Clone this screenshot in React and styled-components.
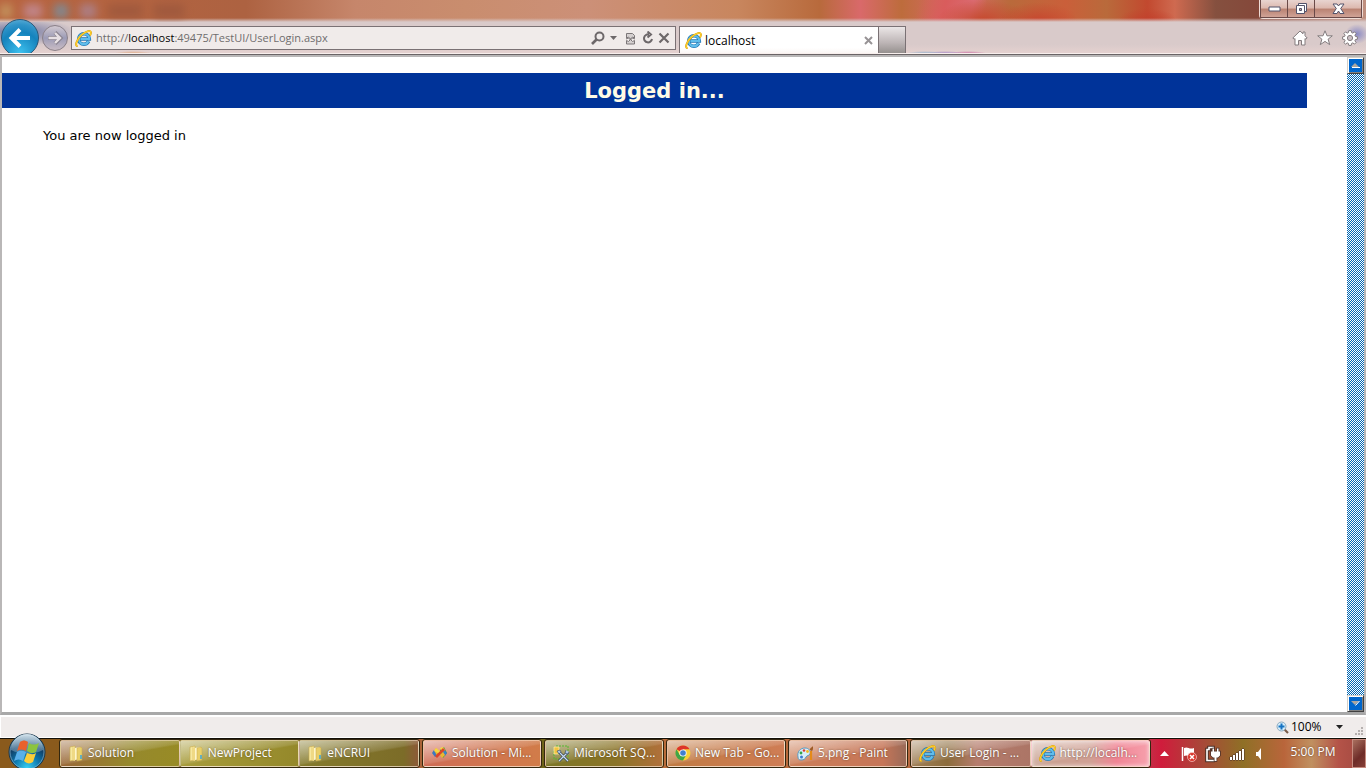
import React from 'react';
import styled, { createGlobalStyle, css } from 'styled-components';

const Global = createGlobalStyle`
  *, *::before, *::after { box-sizing: border-box; }
  html, body { margin: 0; }
  body { background: #fff; }
  button, input { font: inherit; margin: 0; }
`;

const ui = `"Open Sans", "Noto Sans", sans-serif`;
const web = `"DejaVu Sans", sans-serif`;

const Desktop = styled.div`
  display: grid;
  grid-template-rows: auto auto minmax(0, 1fr) auto auto;
  height: 100vh;
  min-height: 400px;
  font-family: ${ui};
  font-size: 12px;
  line-height: 16px;
  color: #000;
`;

const TitleBar = styled.header`
  display: flex;
  justify-content: flex-end;
  height: 22px;
  padding-right: 3px;
  overflow: hidden;
  position: relative;
  background:
    linear-gradient(180deg, transparent 18px, #d9caca 100%),
    radial-gradient(ellipse 30px 14px at 84% 100%, #c2402c, transparent),
    radial-gradient(ellipse 40px 20px at 76% 100%, #c8452e, transparent),
    radial-gradient(ellipse 46px 20px at 72% 90%, #c64a30, transparent),
    linear-gradient(105deg, transparent 67%, #d95c5c 69%, #da6a70 71%, transparent 72%),
    linear-gradient(90deg, #b8643f 0, #ad6241 18%, #c6866b 26%, #c98d6e 34%, #cc9078 43%, #c8865e 54%, #b86a3c 60%, #d9696a 63%, #bd6c3c 66%, #d9696a 70%, #b96a3b 74%, #ca5f3a 78%, #b96a3b 81%, #c2492f 84%, #cf6a50 86%, #85503f 89%, #85483a 92%, #c09080 100%);
`;

const GhostTitle = styled.div`
  position: absolute;
  inset: 4px auto auto 0;
  display: flex;
  gap: 12px;
  filter: blur(4px);
  opacity: 0.6;
`;

const GhostMark = styled.i`
  width: ${(p) => p.$w}px;
  height: 14px;
  background: ${(p) => p.$c};
`;

const WindowButtons = styled.div`
  display: flex;
  height: 19px;
  border: 1px solid #f0dcd6;
  border-top: 0;
  border-radius: 0 0 4px 4px;
  background: linear-gradient(#e8d4d0 0, #dcb8ae 45%, #b98272 50%, #d3a79b 100%);
`;

const WindowButton = styled.button`
  display: grid;
  place-items: center;
  width: ${(p) => p.$w}px;
  padding: 0;
  border: 1px solid #6a4a48;
  border-top: 0;
  border-left-width: ${(p) => (p.$first ? 1 : 0)}px;
  background: none;
`;

const NavBar = styled.nav`
  display: flex;
  align-items: flex-start;
  height: 33px;
  padding: 4px 8px 0 1px;
  border-bottom: 1px solid #6a6466;
  box-shadow: inset 0 -1px #f8efed;
  background:
    radial-gradient(ellipse 20px 3px at 133px 100%, #dfa06e, transparent),
    radial-gradient(ellipse 20px 3px at 925px 100%, #7fa8cc, transparent),
    radial-gradient(ellipse 20px 3px at 945px 100%, #9474c4, transparent),
    radial-gradient(ellipse 20px 3px at 968px 100%, #c4589a, transparent),
    radial-gradient(ellipse 12px 10px at calc(100% - 9px) 12px, #8a8ac4, transparent),
    radial-gradient(ellipse 60px 14px at 16px 10px, #69719f, transparent),
    linear-gradient(#d9caca 0, #d9caca 70%, #e6d2d0 100%);
`;

const BackButton = styled.button`
  display: grid;
  place-items: center;
  width: 38px;
  height: 38px;
  margin-top: -7px;
  padding: 0;
  border: 1px solid #2a5878;
  border-radius: 50%;
  background: radial-gradient(circle at 50% 90%, #3cc0ee, #1583bd 55%, #2f93c8 75%, #71bbdd);
  clip-path: inset(0 0 4px 0);
  z-index: 1;
`;

const ForwardButton = styled.button`
  display: grid;
  place-items: center;
  width: 26px;
  height: 26px;
  margin: -1px 3px 0;
  padding: 0;
  border: 1px solid #8a8088;
  border-radius: 50%;
  background: linear-gradient(#d2c9d0, #9c9bb6 50%, #c9bcc4);
`;

const AddressBar = styled.div`
  display: flex;
  align-items: center;
  flex: 0 1 605px;
  min-width: 0;
  height: 24px;
  padding: 0 5px 0 3px;
  gap: 4px;
  border: 1px solid #7a7174;
  background: #f0ebea;
`;

const Url = styled.a`
  flex: 1;
  min-width: 0;
  overflow: hidden;
  white-space: nowrap;
  font-size: 11px;
  color: #6f6d6d;
  text-decoration: none;

  b { font-weight: 400; color: #000; }
`;

const IconButton = styled.button`
  display: grid;
  place-items: center;
  flex: none;
  padding: 0;
  border: 0;
  background: none;
`;

const Tab = styled.div`
  display: flex;
  align-items: center;
  flex: 0 1 200px;
  height: 27px;
  margin-left: 3px;
  padding: 0 5px;
  gap: 3px;
  border: 1px solid #7a7174;
  border-bottom: 0;
  background: linear-gradient(#fff, #fff 80%, #fbf6f4);

  span { flex: 1; padding-top: 2px; }
`;

const NewTab = styled.button`
  width: 27px;
  height: 27px;
  border: 1px solid #7a7174;
  border-left: 0;
  border-bottom: 0;
  background: linear-gradient(#ebe6e6, #bdb5b6 60%, #96918f);
`;

const Tools = styled.div`
  display: flex;
  gap: 9px;
  margin: 4px 0 0 auto;
`;

const Viewport = styled.div`
  display: flex;
  min-height: 0;
  border: solid #b9b7b7;
  border-width: 2px 2px 3px 2px;
  border-bottom-color: #a8a8a8;
  background: #fff;
`;

const Page = styled.main`
  flex: 1;
  padding: 16px 40px 0 0;
  font-family: ${web};
`;

const Banner = styled.h1`
  margin: 0;
  padding-top: 2px;
  background: #003399;
  color: #fffbe6;
  font-size: 21px;
  line-height: 33px;
  font-weight: 700;
  text-align: center;
`;

const Message = styled.p`
  margin: 20px 0 0 41px;
  font-size: 13px;
  line-height: 16px;
`;

const ScrollBar = styled.div`
  display: flex;
  flex-direction: column;
  justify-content: space-between;
  width: 17px;
  background: repeating-conic-gradient(#0066b3 0 25%, #fff 0 50%) 0 0 / 2px 2px;
`;

const ScrollArrow = styled.button`
  display: grid;
  place-items: center;
  height: 17px;
  padding: 0;
  border: 1px solid;
  border-color: #d4d0c8 #404040 #404040 #d4d0c8;
  box-shadow: inset 1px 1px #fff, inset -1px -1px #808080;
  background: #0066cc;
`;

const StatusBar = styled.footer`
  display: flex;
  align-items: center;
  justify-content: flex-end;
  height: 23px;
  padding-right: 2px;
  border-top: 2px solid #fff;
  border-bottom: 1px solid #fff;
  border-left: 1px solid #fff;
  background: #f0eceb;
`;

const Zoom = styled.button`
  display: flex;
  align-items: center;
  gap: 2px;
  padding: 0 1px 0 0;
  border: 0;
  background: none;
  font-size: 12px;

  span { width: 42px; text-align: left; }
`;

const Grip = styled.svg`
  margin-left: 9px;
  align-self: flex-end;
`;

const Taskbar = styled.div`
  display: flex;
  height: 30px;
  border-top: 1px solid #141008;
  background: linear-gradient(90deg, #8a5a1c 0, #8a5a1c 4%, #7a6818 20%, #847020 28%, #b82c38 29%, #a86838 31%, #6e6418 40%, #b86c3a 48%, #b8683e 66%, #8e5f48 75%, #c33048 84%, #d01c3c 85%, #a84838 88%, #8f7026 91%, #b9653b 94%, #c09060 96%, #b45348 98%, #a04840 100%);
`;

const StartButton = styled.button`
  width: 59px;
  height: 36px;
  margin-top: -6px;
  padding: 0 0 0 8px;
  border: 0;
  background: none;
  z-index: 1;
  clip-path: inset(0 0 1px 0);
  text-align: left;
`;

const TaskGroup = styled.div`
  display: flex;
  flex: 0 1 ${(p) => p.$w}px;
  min-width: 0;
  height: 29px;
  margin-right: 2px;
  border: 1px solid #33270f;
  border-radius: 3px;
  overflow: hidden;
`;

const Task = styled.button`
  display: flex;
  align-items: center;
  flex: 1 1 0;
  min-width: 0;
  gap: 4px;
  padding: 0 6px 1px 7px;
  border: 1px solid rgba(255, 235, 215, 0.6);
  border-radius: 2px;
  color: #fff;
  text-shadow: 0 0 2px rgba(60, 40, 20, 0.7);
  background: linear-gradient(170deg, rgba(255, 255, 255, 0.6), rgba(255, 255, 255, 0.12) 50%, transparent 54%), ${(p) => p.$bg};

  & + & { border-left-color: rgba(255, 255, 255, 0.45); }
  svg { flex: none; }
  span { white-space: nowrap; }
  ${(p) => p.$active && css`box-shadow: inset 0 0 4px rgba(255, 255, 255, 0.7);`}
`;

const Tray = styled.div`
  display: flex;
  align-items: center;
  margin-left: auto;
  color: #fff;
  text-shadow: 0 0 2px #5a3828;
`;

const Clock = styled.time`
  width: 62px;
  margin-left: 16px;
  padding-bottom: 3px;
  text-align: center;
`;

const ShowDesktop = styled.button`
  width: 14px;
  height: 29px;
  margin-left: 8px;
  border: 1px solid #c78c80;
  background: linear-gradient(135deg, #a9705f, #6e2c28 60%, #874038);
`;

const IE = ({ size = 17 }) => (
  <svg width={size} height={size} viewBox="0 0 17 17" fill="none" aria-hidden="true">
    <path d="M13.6 11.2C12.4 13.6 10.800 14.300 9 14.300A5.300 5.300 0 1 1 14.300 9H5.500" stroke="#2277b5" strokeWidth="3.600" />
    <path d="M13.400 11.200C12.400 13.300 10.800 14.200 9 14.200A5.200 5.200 0 1 1 14.200 9H5.500" stroke="#5fbdeb" strokeWidth="2.200" />
    <path d="M2.600 15.900C-.5 16.500 1.500 9.500 6.500 5C10.500 1.200 15.500-.2 15.900 2.400C16 3.300 15.600 4.400 15 5.400" stroke="#d49a00" strokeWidth="1.900" />
    <path d="M2.600 15.900C-.5 16.500 1.500 9.500 6.500 5C10.500 1.200 15.500-.2 15.900 2.400C16 3.300 15.600 4.400 15 5.400" stroke="#ffd02e" strokeWidth="1.200" />
  </svg>
);

const Folder = () => (
  <svg width="16" height="17" viewBox="0 0 16 17" aria-hidden="true">
    <path d="M2 2l5-1v14l-5 1z" fill="#f6e8a0" stroke="#c9ab4c" strokeWidth=".6" />
    <path d="M7 3l5-1v12l-5 1z" fill="#fff6c8" />
    <path d="M9 3l4-1 1 1v12l-5 1z" fill="#e9cf68" stroke="#c5a74c" strokeWidth=".5" />
    <path d="M4 2l3 1v13l-3-1z" fill="#efd984" />
    <path d="M13 10v4" stroke="#3aa4dc" strokeWidth="1.500" />
  </svg>
);

const VisualStudio = () => (
  <svg width="17" height="14" viewBox="0 0 17 14" aria-hidden="true">
    <path d="M1 7l4-5 4 4-4 5z" fill="#e7b52e" />
    <path d="M1 7l2-3 3 6-2 1z" fill="#3a78c4" />
    <path d="M9 4l4-3 3 6-4 5-3-4z" fill="#49a042" />
    <path d="M12 2l4 5-2 3-4-6z" fill="#3b80ca" />
    <path d="M9 2l3-1 2 3-3 2z" fill="#f5d541" />
    <path d="M4 10l8-8 2 2-8 8z" fill="#dc4528" />
    <path d="M5 2l4 3-2 2-4-2z" fill="#f5d541" />
    <path d="M9 9l3-3 2 3-3 3z" fill="#f0b52f" />
  </svg>
);

const SqlServer = () => (
  <svg width="17" height="17" viewBox="0 0 17 17" fill="none" aria-hidden="true">
    <path d="M3 1h12v13H1V5" stroke="#53b92e" strokeDasharray="2 1" />
    <path d="M1 2h5v7H1z" fill="#f2c340" stroke="#fff0a8" strokeWidth=".7" />
    <path d="M6 7l9 9M15 7l-9 9" stroke="#36465c" strokeWidth="2.600" />
    <path d="M6 7l9 9M15 7l-9 9" stroke="#c9def2" strokeWidth="1.200" />
    <path d="M4 6l3-1 1 2-2 2zM13 5l-1 3 3 1 1-2" fill="#a9c6e2" stroke="#36465c" strokeWidth=".6" />
  </svg>
);

const Chrome = () => (
  <svg width="16" height="16" viewBox="0 0 16 16" aria-hidden="true">
    <circle cx="8" cy="8" r="7.500" fill="#f8cf35" />
    <path d="M8 8L1.500 4.250A7.500 7.500 0 0 1 14.500 4.250H8z" fill="#dd3529" />
    <path d="M1.500 4.250A7.500 7.500 0 0 0 8 15.500L11.200 10 8 8 4.800 10z" fill="#3fa547" />
    <circle cx="8" cy="8" r="3.600" fill="#fff" />
    <circle cx="8" cy="8" r="2.800" fill="#3f7fd0" />
  </svg>
);

const Paint = () => (
  <svg width="17" height="16" viewBox="0 0 17 16" aria-hidden="true">
    <path d="M1 12C0 7 3 3 8 3c4 0 6 3 5 6-1 2-3 1-4 3s-2 3-5 3c-2 0-3-1-3-3z" fill="#d8eef8" stroke="#5b9ac0" />
    <circle cx="4" cy="8" r="1.400" fill="#36a34a" />
    <circle cx="7" cy="5.500" r="1.300" fill="#dc3a30" />
    <circle cx="10.500" cy="6.500" r="1.400" fill="#efbd20" />
    <circle cx="4.500" cy="12" r="1.500" fill="#3b7bd0" />
    <path d="M14 6v9" stroke="#e58a18" strokeWidth="2.200" />
    <path d="M13 5c0-3 2-2 3-4 0 3 0 4-1 5z" fill="#9d5a24" />
  </svg>
);

const StartOrb = () => (
  <svg width="38" height="38" viewBox="0 0 38 38" aria-hidden="true">
    <defs>
      <radialGradient id="orb" cx="50%" cy="95%" r="90%">
        <stop offset="0" stopColor="#39d1f4" />
        <stop offset=".4" stopColor="#0c78ae" />
        <stop offset=".72" stopColor="#123f66" />
        <stop offset="1" stopColor="#4c7391" />
      </radialGradient>
      <linearGradient id="gloss" x2="0" y2="1">
        <stop stopColor="#e6f1f7" stopOpacity=".85" />
        <stop offset="1" stopColor="#9fc3d8" stopOpacity=".3" />
      </linearGradient>
    </defs>
    <circle cx="19" cy="19" r="18" fill="url(#orb)" stroke="#17354c" />
    <circle cx="19" cy="19" r="17" fill="none" stroke="#86b4cb" strokeOpacity=".7" />
    <path d="M3 17a16 16 0 0 1 32 0c-10 5-22 5-32 0z" fill="url(#gloss)" />
    <path d="M12 9c3-2 5-2 8 0l-2 9c-3-2-6-2-9 0z" fill="#e9612b" />
    <path d="M21 10c3 2 6 2 10 0l-3 9c-3 2-6 1-9-1z" fill="#8cc43f" />
    <path d="M9 19c3-2 6-1 9 0l-3 9c-3-2-6-2-9 0z" fill="#5ab0ea" />
    <path d="M19 20c3 1 6 2 9 0l-3 9c-3 2-6 2-9-1z" fill="#fccd39" />
  </svg>
);

const Stroke = ({ w = 14, h = 14, children }) => (
  <svg width={w} height={h} viewBox={`0 0 ${w} ${h}`} fill="none" stroke="#6d686a" strokeWidth="2" aria-hidden="true">
    {children}
  </svg>
);

const Tool = ({ children }) => (
  <svg width="16" height="16" viewBox="0 0 16 16" fill="#fff" stroke="#837c7e" aria-hidden="true">
    {children}
  </svg>
);

const folders = [
  ['Solution', 'linear-gradient(100deg, #9a6638, #96892c 60%, #988b25)'],
  ['NewProject', 'linear-gradient(100deg, #a89d3c, #94882a)'],
  ['eNCRUI', 'linear-gradient(90deg, #857b2c, #7c6c28 88%, #8c5a38)'],
];

const apps = [
  ['Solution - Mi...', VisualStudio, 'linear-gradient(100deg, #cf6c55, #d17c49)'],
  ['Microsoft SQ...', SqlServer, 'linear-gradient(90deg, #7d7626, #8b7427 60%, #b0703a)'],
  ['New Tab - Go...', Chrome, 'linear-gradient(90deg, #c07a42, #cf7d55)'],
  ['5.png - Paint', Paint, 'linear-gradient(90deg, #cc7e58, #c67658 80%, #9a6a58)'],
];

const windows = [
  ['User Login - ...', 'linear-gradient(90deg, #a08058, #8c6c3c 30%, #b57c6c 55%, #ac7566)', false],
  ['http://localh...', 'linear-gradient(90deg, #c8a090, #d0a094 50%, #f08494 72%, #f6a0ac)', true],
];

export default function App() {
  return (
    <>
      <Global />
      <Desktop>
        <TitleBar>
          <GhostTitle aria-hidden="true">
            <GhostMark $w={12} $c="#c9b070" />
            <GhostMark $w={18} $c="#c79ab8" />
            <GhostMark $w={14} $c="#60a0c4" />
            <GhostMark $w={16} $c="#a890b0" />
            <GhostMark $w={34} $c="#96543c" />
            <GhostMark $w={30} $c="#96543c" />
          </GhostTitle>
          <WindowButtons>
            <WindowButton $w={28} $first aria-label="Minimize">
              <svg width="13" height="6" viewBox="0 0 13 6"><path d="M1 1h11v4H1z" fill="#fff" stroke="#53536a" /></svg>
            </WindowButton>
            <WindowButton $w={27} aria-label="Restore">
              <svg width="13" height="13" viewBox="0 0 13 13" fill="#fff" stroke="#53536a">
                <path d="M3.500 1.500h8v8h-8z" />
                <path d="M1.500 3.500h8v8h-8z" />
                <path d="M4.500 6.500h2v2h-2z" fill="#c9a69c" />
              </svg>
            </WindowButton>
            <WindowButton $w={47} aria-label="Close window">
              <svg width="13" height="12" viewBox="0 0 13 12">
                <path d="M1 1h4l1.500 2L8 1h4L8.700 5.500 12 10.500H8L6.500 8 5 10.500H1l3.300-5z" fill="#fff" stroke="#53536a" />
              </svg>
            </WindowButton>
          </WindowButtons>
        </TitleBar>

        <NavBar>
          <BackButton aria-label="Back">
            <svg width="24" height="24" viewBox="0 0 24 24" fill="none" stroke="#fff" strokeWidth="4"><path d="M22 12H5M12 3.500L3.500 12l8.500 8.500" /></svg>
          </BackButton>
          <ForwardButton aria-label="Forward">
            <svg width="18" height="18" viewBox="0 0 18 18" fill="none"><path d="M2 9h12M9 3.500L14.500 9 9 14.500" stroke="#8b8490" strokeWidth="4" /><path d="M2.500 9h11.500M9 4l5 5-5 5" stroke="#e7e0e4" strokeWidth="2.400" /></svg>
          </ForwardButton>
          <AddressBar>
            <IE />
            <Url href="#">http://<b>localhost</b>:49475/TestUI/UserLogin.aspx</Url>
            <IconButton aria-label="Search"><Stroke><circle cx="8.500" cy="5.500" r="4" /><path d="M5.500 8.500L1 13" strokeWidth="2.600" /></Stroke></IconButton>
            <IconButton aria-label="Show suggestions"><svg width="9" height="5" viewBox="0 0 9 5"><path d="M1 0h7L4.500 4z" fill="#6d686a" /></svg></IconButton>
            <IconButton aria-label="Compatibility view">
              <svg width="16" height="13" viewBox="1 0 16 13" fill="none" stroke="#7b7678">
                <path d="M5.500 6V1.500h6l2 2V6l-2-1-2 2-2-2zM5.500 8.500l2 1 2-2 2 2 2-1v3.500h-8z" fill="#d5d0d0" />
                <path d="M5 7l2.500-1 2 2 2-2L14 7" />
              </svg>
            </IconButton>
            <IconButton aria-label="Refresh"><Stroke w={12}><path d="M7 3.500A4 4 0 1 0 10 8M5.500.5L9 3.500 5.500 6.500" /></Stroke></IconButton>
            <IconButton aria-label="Stop"><Stroke w={12} h={12}><path d="M1.500 1.500l9 9M10.500 1.500l-9 9" strokeWidth="2.200" /></Stroke></IconButton>
          </AddressBar>
          <Tab>
            <IE />
            <span>localhost</span>
            <IconButton aria-label="Close tab"><svg width="9" height="9" viewBox="0 0 9 9"><path d="M1 1l7 7M8 1L1 8" stroke="#979395" strokeWidth="2" /></svg></IconButton>
          </Tab>
          <NewTab aria-label="New tab" />
          <Tools>
            <IconButton aria-label="Home"><Tool><path d="M8 1L.8 8l1.400 1.200L3 8.500V15h3.500v-4.500h3V15H13V8.500l.8.700L15.200 8 13 5.800V2h-2v1.800z" /></Tool></IconButton>
            <IconButton aria-label="Favorites"><Tool><path d="M8 .8l2 5h5.300l-4.200 3.400 1.600 5.400L8 11.400l-4.700 3.200 1.600-5.400L.7 5.800H6z" /></Tool></IconButton>
            <IconButton aria-label="Tools">
              <Tool>
                <path d="M6.800.6h2.400l.4 2 1.200.5 1.700-1.200 1.600 1.600-1.200 1.700.5 1.200 2 .4v2.400l-2 .4-.5 1.200 1.200 1.700-1.600 1.600-1.700-1.200-1.200.5-.4 2H6.800l-.4-2-1.200-.5-1.700 1.200-1.600-1.600 1.200-1.700-.5-1.200-2-.4V6.800l2-.4.5-1.200-1.200-1.700 1.600-1.600 1.700 1.200 1.200-.5z" />
                <circle cx="8" cy="8" r="2.600" fill="#cbbfc4" />
              </Tool>
            </IconButton>
          </Tools>
        </NavBar>

        <Viewport>
          <Page>
            <Banner>Logged in...</Banner>
            <Message>You are now logged in</Message>
          </Page>
          <ScrollBar>
            <ScrollArrow aria-label="Scroll up"><svg width="9" height="5" viewBox="0 0 9 5"><path d="M0 4l4-4 4 4z" fill="#aaa69f" /><path d="M1 4.500h8" stroke="#fff" /></svg></ScrollArrow>
            <ScrollArrow aria-label="Scroll down"><svg width="9" height="5" viewBox="0 0 9 5"><path d="M0 0h8L4 4z" fill="#aaa69f" /><path d="M8.500 0l-4 4.500" stroke="#fff" /></svg></ScrollArrow>
          </ScrollBar>
        </Viewport>

        <StatusBar>
          <Zoom aria-label="Zoom level 100%">
            <svg width="13" height="13" viewBox="0 0 13 13" fill="none">
              <path d="M8 8l4 4" stroke="#7a5c4a" strokeWidth="2.200" />
              <circle cx="5.500" cy="5.500" r="4.500" fill="#d5ecfa" stroke="#8aa9bf" />
              <path d="M5.500 2.500v6M2.500 5.500h6" stroke="#1673c2" strokeWidth="2" />
            </svg>
            <span>100%</span>
            <svg width="9" height="5" viewBox="0 0 9 5"><path d="M1 0h7L4.500 4z" fill="#222" /></svg>
          </Zoom>
          <Grip width="10" height="10" viewBox="0 0 10 10" fill="#b5b0af" aria-hidden="true">
            <path d="M7 0h2v2H7zM4 3h2v2H4zM7 3h2v2H7zM1 6h2v2H1zM4 6h2v2H4zM7 6h2v2H7z" />
          </Grip>
        </StatusBar>

        <Taskbar>
          <StartButton aria-label="Start"><StartOrb /></StartButton>
          <TaskGroup $w={361}>
            {folders.map(([label, bg]) => <Task key={label} $bg={bg}><Folder /><span>{label}</span></Task>)}
          </TaskGroup>
          {apps.map(([label, Icon, bg]) => (
            <TaskGroup key={label} $w={120}><Task $bg={bg}><Icon /><span>{label}</span></Task></TaskGroup>
          ))}
          <TaskGroup $w={241}>
            {windows.map(([label, bg, active]) => <Task key={label} $bg={bg} $active={active}><IE /><span>{label}</span></Task>)}
          </TaskGroup>
          <Tray>
            <IconButton aria-label="Show hidden icons"><svg width="9" height="5" viewBox="0 0 9 5"><path d="M0 5l4.500-5L9 5z" fill="#fff" /></svg></IconButton>
            <svg width="97" height="18" viewBox="0 0 97 18" aria-hidden="true">
              <path d="M13.500 2v14" stroke="#fff" strokeWidth="1.500" />
              <path d="M15 3c4-2 5 2 10 0v8c-5 2-6-2-10 0z" fill="#fff" />
              <circle cx="23" cy="12" r="4.500" fill="#d9352c" stroke="#fbd0cc" strokeWidth=".7" />
              <path d="M21 10l4 4M25 10l-4 4" stroke="#fff" strokeWidth="1.500" />
              <path d="M45 4.500h-1V2.500h-4v2h-2v11h8" fill="none" stroke="#4a3028" strokeWidth="3.600" />
              <path d="M45 4.500h-1V2.500h-4v2h-2v11h8" fill="none" stroke="#fff" strokeWidth="1.600" />
              <path d="M42 6.500h9v4l-2 2h-1.500v3.500h-2v-3.500H44l-2-2zM43.500 3.500h1.500v3h-1.500zM48 3.500h1.500v3H48z" fill="#fff" stroke="#4a3028" strokeWidth="1.500" paintOrder="stroke" />
              <path d="M61 12h2v3h-2zM64 10h2v5h-2zM67 8h2v7h-2zM70 6h2v9h-2zM73 4h2v11h-2z" fill="#fff" stroke="#4a3028" strokeWidth="1" paintOrder="stroke" />
              <path d="M87 7h2l3-4v12l-3-4h-2z" fill="#fff" />
            </svg>
            <Clock dateTime="17:00">5:00 PM</Clock>
            <ShowDesktop aria-label="Show desktop" />
          </Tray>
        </Taskbar>
      </Desktop>
    </>
  );
}
